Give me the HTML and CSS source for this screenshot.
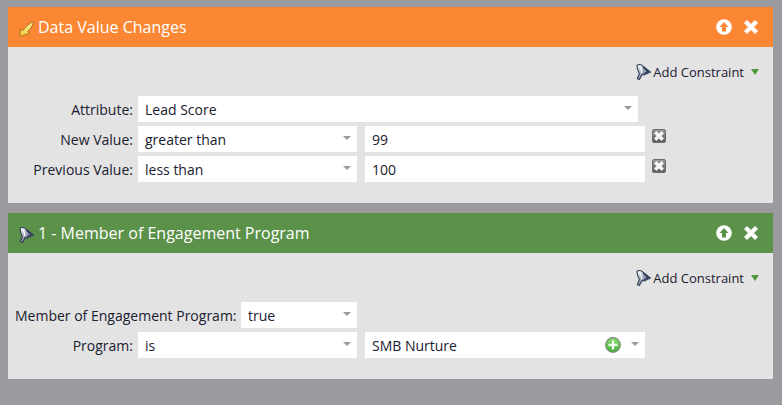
FILE: index.html
```html
<!DOCTYPE html>
<html lang="en">
<head>
<meta charset="utf-8">
<title>Smart list filters</title>
<link rel="stylesheet" href="styles.css">
</head>
<body>
<svg class="defs" width="0" height="0" aria-hidden="true">
  <defs>
    <linearGradient id="funnelFill" x1="0" y1="0" x2="1" y2="1">
      <stop offset="0" stop-color="#f2f4f8"/>
      <stop offset="0.5" stop-color="#9aa3b6"/>
      <stop offset="1" stop-color="#2a3552"/>
    </linearGradient>
    <linearGradient id="boltFill" x1="1" y1="0" x2="0" y2="1">
      <stop offset="0" stop-color="#fdf3a8"/>
      <stop offset="1" stop-color="#f4c430"/>
    </linearGradient>
    <linearGradient id="delFill" x1="0" y1="0" x2="0" y2="1">
      <stop offset="0" stop-color="#a0a0a0"/>
      <stop offset="1" stop-color="#5c5c5c"/>
    </linearGradient>
    <linearGradient id="plusFill" x1="0" y1="0" x2="0" y2="1">
      <stop offset="0" stop-color="#8ae06e"/>
      <stop offset="1" stop-color="#3fae35"/>
    </linearGradient>
    <symbol id="funnel" viewBox="0 0 16 17">
      <path d="M1 1.3 C3.5 .2 6 .6 7.5 2.2 L15.5 8.6 L9 11.6 L6.6 11.2 L3.6 16.6 L1.4 15.4 L3.6 10.4 C2.2 7.4 1 4.2 1 1.3Z" fill="url(#funnelFill)" stroke="#2b3552" stroke-width="1.1" stroke-linejoin="round"/>
      <path d="M2.4 2.2 C4.4 2.6 6 5.6 6 9.6" fill="none" stroke="#ffffff" stroke-width="1.2"/>
      <path d="M7.8 3.6 L12.8 8.4 L8.6 10" fill="none" stroke="#1f2a48" stroke-width="1.2"/>
    </symbol>
    <symbol id="up" viewBox="0 0 16 16">
      <circle cx="8" cy="8" r="7.8" fill="#fff"/>
      <path d="M8 3 L12.4 8 H10 V12.6 H6 V8 H3.6Z" fill="currentColor"/>
    </symbol>
    <symbol id="close" viewBox="0 0 16 16">
      <path d="M1.5 4 L4 1.5 L8 5.5 L12 1.5 L14.5 4 L10.5 8 L14.5 12 L12 14.5 L8 10.5 L4 14.5 L1.5 12 L5.5 8Z" fill="#fff" stroke="#fff" stroke-linejoin="round"/>
    </symbol>
    <symbol id="del" viewBox="0 0 14 14">
      <rect x="0.5" y="0.5" width="13" height="13" rx="1.5" fill="url(#delFill)" stroke="#6d6d6d"/>
      <path d="M2.6 4.4 L4.4 2.6 L7 5.2 L9.6 2.6 L11.4 4.4 L8.8 7 L11.4 9.6 L9.6 11.4 L7 8.8 L4.4 11.4 L2.6 9.6 L5.2 7Z" fill="#f6f6f6" stroke="#f6f6f6" stroke-width="1" stroke-linejoin="round"/>
    </symbol>
  </defs>
</svg>

<section class="panel panel-orange">
  <header class="panel-head">
    <svg class="head-icon" viewBox="0 0 15 16" aria-hidden="true">
      <path d="M14.5 .6 L13 5 L10.6 9 L8.6 10.2 L10 12.6 L.7 15.4 L1.5 8 L3.8 9.6 C6 6 10 2.6 14.5 .6Z" fill="url(#boltFill)" stroke="#ad7a1f" stroke-width="1" stroke-linejoin="round"/>
    </svg>
    <h2 class="panel-title">Data Value Changes</h2>
    <svg class="act-up" aria-hidden="true"><use href="#up"/></svg>
    <svg class="act-close" aria-hidden="true"><use href="#close"/></svg>
  </header>
  <div class="panel-body">
    <div class="constraint">
      <svg class="funnel" aria-hidden="true"><use href="#funnel"/></svg>
      <span>Add Constraint</span>
      <span class="caret-green"></span>
    </div>
    <div class="row">
      <span class="label">Attribute:</span>
      <div class="field w-500"><span>Lead Score</span><i class="arrow"></i></div>
    </div>
    <div class="row">
      <span class="label">New Value:</span>
      <div class="field w-219"><span>greater than</span><i class="arrow"></i></div>
      <div class="field w-280"><span>99</span></div>
      <svg class="del" aria-hidden="true"><use href="#del"/></svg>
    </div>
    <div class="row">
      <span class="label">Previous Value:</span>
      <div class="field w-219"><span>less than</span><i class="arrow"></i></div>
      <div class="field w-280"><span>100</span></div>
      <svg class="del" aria-hidden="true"><use href="#del"/></svg>
    </div>
  </div>
</section>

<section class="panel panel-green">
  <header class="panel-head">
    <svg class="head-icon" aria-hidden="true"><use href="#funnel"/></svg>
    <h2 class="panel-title">1 - Member of Engagement Program</h2>
    <svg class="act-up" aria-hidden="true"><use href="#up"/></svg>
    <svg class="act-close" aria-hidden="true"><use href="#close"/></svg>
  </header>
  <div class="panel-body">
    <div class="constraint">
      <svg class="funnel" aria-hidden="true"><use href="#funnel"/></svg>
      <span>Add Constraint</span>
      <span class="caret-green"></span>
    </div>
    <div class="row">
      <span class="label label-auto">Member of Engagement Program:</span>
      <div class="field w-116"><span>true</span><i class="arrow"></i></div>
    </div>
    <div class="row">
      <span class="label">Program:</span>
      <div class="field w-219"><span>is</span><i class="arrow"></i></div>
      <div class="field w-280">
        <span>SMB Nurture</span>
        <svg class="plus" viewBox="0 0 16 16" aria-hidden="true">
          <circle cx="8" cy="8" r="7.3" fill="url(#plusFill)" stroke="#7b8a78" stroke-width="1.2"/>
          <path d="M8 3.5 V12.5 M3.5 8 H12.5" stroke="#f2fbef" stroke-width="2.4"/>
        </svg>
        <i class="arrow"></i>
      </div>
    </div>
  </div>
</section>
</body>
</html>
```
FILE: styles.css
```css
* { box-sizing: border-box; }
html, body { height: 100%; }
body {
  margin: 0;
  padding: 7px 9px 0 8px;
  background: #9b9a9f;
  font-family: "Open Sans", "Liberation Sans", sans-serif;
  font-size: 14px;
  color: #1a2030;
  overflow: hidden;
}
.defs { position: absolute; }
.panel { background: #e3e3e3; margin-bottom: 10px; }
.panel-head {
  display: flex;
  align-items: center;
  height: 40px;
  padding: 0 14px 0 11px;
  color: #fff;
}
.panel-orange .panel-head { background: #fb8735; }
.panel-green .panel-head { background: #5b9149; }
.panel-title {
  margin: 0 auto 0 4px;
  font-size: 16px;
  font-weight: 400;
  line-height: 22px;
}
.head-icon { width: 15px; height: 16px; margin-top: 4px; flex: none; }
.act-up { width: 16px; height: 16px; margin-right: 11px; flex: none; }
.panel-orange .act-up { color: #fb8735; }
.panel-green .act-up { color: #5b9149; }
.act-close { width: 16px; height: 16px; flex: none; }
.panel-body { padding: 17px 7px 0; }
.panel-orange .panel-body { height: 156px; }
.panel-green .panel-body { height: 126px; }
.constraint {
  display: flex;
  align-items: center;
  justify-content: flex-end;
  height: 16px;
  margin-bottom: 16px;
  padding-right: 7px;
  font-size: 13px;
  line-height: 16px;
}
.funnel { width: 15px; height: 16px; margin-right: 2px; flex: none; }
.caret-green {
  width: 0;
  height: 0;
  margin-left: 7px;
  border-left: 4px solid transparent;
  border-right: 4px solid transparent;
  border-top: 6px solid #4f9a38;
}
.row {
  display: flex;
  align-items: flex-start;
  height: 26px;
  margin-bottom: 4px;
}
.label {
  flex: none;
  width: 118px;
  margin-right: 5px;
  text-align: right;
  line-height: 27px;
  white-space: nowrap;
}
.label-auto { width: 221px; }
.field {
  display: flex;
  align-items: center;
  flex: none;
  height: 26px;
  padding: 0 6px 0 7px;
  background: #fff;
  line-height: 24px;
  margin-right: 8px;
}
.field > span { margin-right: auto; padding-top: 2px; }
.w-500 { width: 500px; }
.w-219 { width: 219px; }
.w-280 { width: 280px; margin-right: 7px; }
.w-116 { width: 116px; }
.arrow {
  width: 0;
  height: 0;
  margin-top: -2px;
  border-left: 4px solid transparent;
  border-right: 4px solid transparent;
  border-top: 4px solid #9a9a9a;
}
.del { width: 14px; height: 14px; margin-top: 3px; flex: none; }
.plus { width: 16px; height: 16px; margin-right: 10px; flex: none; }
```
